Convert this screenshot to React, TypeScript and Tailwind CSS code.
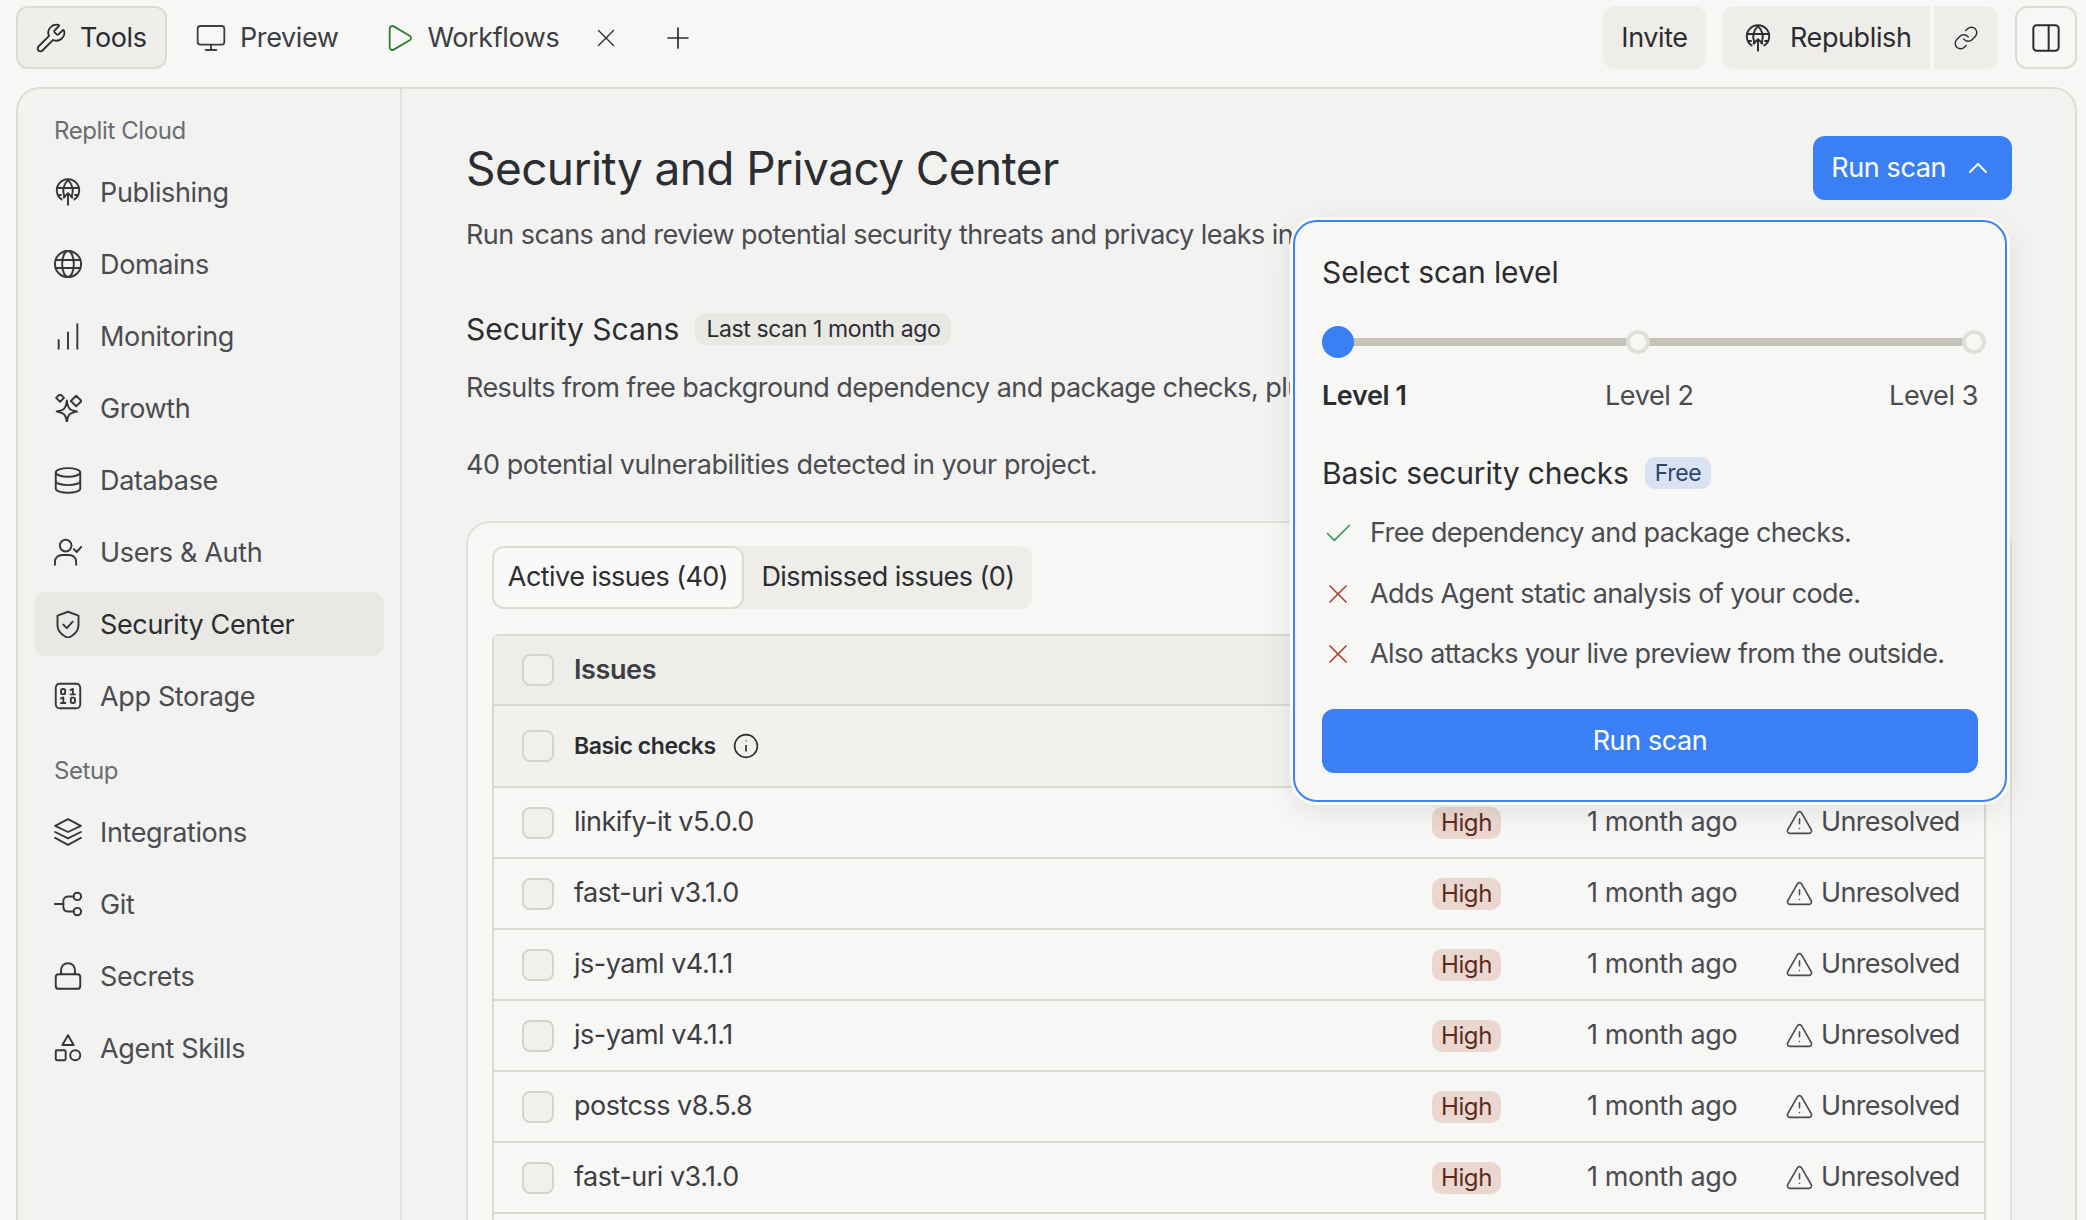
import type { ReactNode } from "react";
import { X, Plus, ChevronUp, Check, Link, Wrench, Monitor, Play, TriangleAlert } from "lucide-react";

function Ico({ children, className = "w-7 h-7" }: { children: ReactNode; className?: string }) {
  return (
    <svg viewBox="0 0 24 24" fill="none" stroke="currentColor" strokeWidth="1.65" strokeLinecap="round" strokeLinejoin="round" className={`shrink-0 ${className}`}>
      {children}
    </svg>
  );
}

const PublishIcon = ({ className }: { className?: string }) => (
  <Ico className={className}>
    <path d="M6.5 18.5A9.6 9.6 0 1 1 17.5 18.5" />
    <path d="M9 16.5C7 11 8 5.5 12 1.8C16 5.5 17 11 15 16.5" />
    <path d="M2.6 8.5h18.8M3.4 14.5h2.6M18 14.5h2.6" />
    <path d="M12 23V13M8.2 16.8L12 13l3.8 3.8" />
  </Ico>
);
const GlobeIcon = () => (
  <Ico>
    <circle cx="12" cy="12" r="11.2" />
    <ellipse cx="12" cy="12" rx="5" ry="11.2" />
    <path d="M1.5 8.5h21M1.5 15.5h21" />
  </Ico>
);
const BarsIcon = () => (
  <Ico>
    <path d="M4 23v-7.5M12 23V9M20 23V2" />
  </Ico>
);
const GrowthIcon = () => (
  <Ico>
    <path d="M11 5.5C11.8 12 13 13.8 19.7 15C13 16.2 11.8 18 11 24.5C10.2 18 9 16.2 2.3 15C9 13.8 10.2 12 11 5.5Z" />
    <path d="M5.2 0L8.6 3.3L5.2 6.6L1.8 3.3Z" />
    <path d="M19 1.5L23.6 6L19 10.5L14.4 6Z" />
  </Ico>
);
const DatabaseIcon = () => (
  <Ico>
    <ellipse cx="12" cy="5.5" rx="10.5" ry="3.7" />
    <path d="M1.5 5.5V19.5C1.5 21.5 6.5 23 12 23C17.5 23 22.5 21.5 22.5 19.5V5.5" />
    <path d="M1.5 13C1.5 15 6.5 16.4 12 16.4C17.5 16.4 22.5 15 22.5 13" />
  </Ico>
);
const UserCheckIcon = () => (
  <Ico>
    <circle cx="10" cy="6.5" r="5" />
    <path d="M0.8 23V20.5C0.8 17 3.5 14.5 7 14.5H13C16.5 14.5 19 17 19 20.5V23" />
    <path d="M17 9.5L19.5 12L23.5 7.5" />
  </Ico>
);
const ShieldIcon = () => (
  <Ico>
    <path d="M12 1.5L21 4.8V13C21 18 17.5 21.5 12 24C6.5 21.5 3 18 3 13V4.8Z" />
    <path d="M8 12.5L11 15.5L16 10" />
  </Ico>
);
const BinaryIcon = () => (
  <Ico>
    <rect x="1.5" y="1.5" width="21" height="21" rx="3.5" />
    <rect x="6" y="6" width="3.6" height="4.4" rx="1.4" />
    <path d="M14.2 6.8L16.2 6V10.6M14.2 10.6H18" />
    <path d="M6 14L8 13.3V18M6 18H9.8" />
    <rect x="14.4" y="13.4" width="3.6" height="4.6" rx="1.4" />
  </Ico>
);
const LayersIcon = () => (
  <Ico>
    <path d="M12 1L23 6.8L12 12L1 6.8Z" />
    <path d="M1 12L12 17.5L23 12" />
    <path d="M1 17L12 23L23 17" />
  </Ico>
);
const GitIcon = () => (
  <Ico>
    <path d="M0.5 12H8" />
    <path d="M17 5.5H12C9.5 5.5 8 7.3 8 9.5V14C8 16.7 9.5 18.5 12 18.5H17" />
    <circle cx="20" cy="5.5" r="3.2" />
    <circle cx="20" cy="18.5" r="3.2" />
  </Ico>
);
const LockIcon = () => (
  <Ico>
    <rect x="1.5" y="10.5" width="21" height="12.5" rx="2.5" />
    <path d="M6 10.5V7.5C6 3.5 8.5 1 12 1C15.5 1 18 3.5 18 7.5V10.5" />
  </Ico>
);
const ShapesIcon = () => (
  <Ico>
    <path d="M12 1L16.8 9.5H7.2Z" />
    <rect x="1.5" y="14" width="8.5" height="8.5" rx="1" />
    <circle cx="18.2" cy="18.2" r="4.3" />
  </Ico>
);

function NavRow({ icon, label, active }: { icon: ReactNode; label: string; active?: boolean }) {
  return (
    <div className={`flex items-center h-16 px-5 gap-[18px] rounded-xl shrink-0 ${active ? "bg-[#e9e8e4] text-[#2b2d31]" : "text-[#4a4c52]"}`}>
      <span className="text-[#35373c]">{icon}</span>
      <span className="text-[27px] leading-none tracking-[-0.35px]">{label}</span>
    </div>
  );
}

const issues = ["linkify-it v5.0.0", "fast-uri v3.1.0", "js-yaml v4.1.1", "js-yaml v4.1.1", "postcss v8.5.8", "fast-uri v3.1.0"];

function Box() {
  return <div className="w-8 h-8 rounded-lg border-2 border-[#d5d3cc] bg-[#f0f0ec] shrink-0" />;
}

function IssueRow({ name }: { name: string }) {
  return (
    <div className="flex items-center h-[71px] pl-[28px] pr-[24px] border-b-2 border-[#d9d8d1] text-[27px] text-[#3c3e44]">
      <Box />
      <span className="ml-[20px] flex-1 tracking-[-0.5px]">{name}</span>
      <span className="w-[69px] h-8 rounded-[10px] bg-[#ead8d0] text-[#5e2a1e] text-[24px] flex items-center justify-center">High</span>
      <span className="ml-[86px] w-[148px] whitespace-nowrap text-[#4a4c52]">1 month ago</span>
      <span className="ml-[50px] flex items-center gap-[7px] w-[175px] whitespace-nowrap text-[#4a4c52] tracking-[-0.7px]">
        <TriangleAlert className="w-[29px] h-[29px] shrink-0" strokeWidth={1.3} />
        Unresolved
      </span>
    </div>
  );
}

function Level({ label, bold, className = "" }: { label: string; bold?: boolean; className?: string }) {
  return <span className={`text-[27px] ${bold ? "font-semibold text-[#2b2d31]" : "text-[#4a4c52]"} ${className}`}>{label}</span>;
}

function CheckLine({ ok, text }: { ok?: boolean; text: string }) {
  return (
    <div className="flex items-center gap-[14px] -ml-[2px] h-[60.5px] text-[27px] text-[#4a4c52] tracking-[-0.6px]">
      <span className="w-9 h-9 flex items-center justify-center shrink-0">
        {ok ? <Check className="w-[33px] h-[33px] text-[#3d9a5c]" strokeWidth={1.25} /> : <X className="w-8 h-8 text-[#a8412f]" strokeWidth={1.25} />}
      </span>
      <span>{text}</span>
    </div>
  );
}

function ScanPopover() {
  return (
    <div className="absolute left-[1293px] top-[220px] w-[714px] h-[582px] rounded-3xl border-2 border-[#3f82f5] bg-[#f7f7f5] px-[27px] shadow-[0_0_0_3px_#fbfbfa,0_8px_30px_rgba(0,0,0,0.1)] flex flex-col">
      <div className="mt-[30px] text-[30px] leading-[40px] text-[#2b2d31] tracking-[-0.1px]">Select scan level</div>
      <div className="relative mt-[38px] h-6">
        <div className="absolute left-0 right-0 top-2 h-2 bg-[#c5c2b8] rounded-full" />
        <div className="absolute left-0 top-[-4px] w-8 h-8 rounded-full bg-[#3b7ff5]" />
        <div className="absolute left-[304px] top-0 w-6 h-6 rounded-full border-[4px] border-[#e0dfda] bg-[#f7f7f5]" />
        <div className="absolute right-[-8px] top-0 w-6 h-6 rounded-full border-[4px] border-[#e0dfda] bg-[#f7f7f5]" />
      </div>
      <div className="mt-[25px] flex justify-between items-center h-[34px]">
        <Level label="Level 1" bold />
        <Level label="Level 2" className="ml-[3px]" />
        <Level label="Level 3" />
      </div>
      <div className="mt-[40px] flex items-center gap-4 h-[40px]">
        <span className="text-[30px] text-[#2b2d31] tracking-[-0.15px]">Basic security checks</span>
        <span className="h-8 px-[10px] rounded-[10px] bg-[#d8e2f3] text-[#2f4569] text-[23px] flex items-center">Free</span>
      </div>
      <div className="mt-[10px] flex flex-col">
        <CheckLine ok text="Free dependency and package checks." />
        <CheckLine text="Adds Agent static analysis of your code." />
        <CheckLine text="Also attacks your live preview from the outside." />
      </div>
      <button className="mt-[24px] w-full h-16 pt-[1px] rounded-xl bg-[#3b7ff5] text-white text-[27px]">Run scan</button>
    </div>
  );
}

export default function App() {
  return (
    <div className="relative h-[1220px] overflow-hidden bg-[#f7f7f5] font-['Inter','Liberation_Sans',sans-serif] text-[#2b2d31] tracking-[-0.4px]">
      <div className="h-[87px] pl-4 pr-[9px] pt-[6px] flex items-start">
        <div className="flex items-center h-[63px] gap-[13px] w-[151px] pl-[17px] pt-[1px] rounded-xl border-2 border-[#dcdbd4] bg-[#efeeea] text-[27px]">
          <Wrench className="w-8 h-8" strokeWidth={1.35} />
          Tools
        </div>
        <div className="flex items-center h-[63px] pt-[1px] gap-[13px] ml-[28px] text-[27px] text-[#3c3e44]">
          <Monitor className="w-8 h-8" strokeWidth={1.35} />
          Preview
        </div>
        <div className="flex items-center h-[63px] pt-[1px] gap-[12px] ml-[45px] text-[27px] text-[#3c3e44]">
          <Play className="w-8 h-8 text-[#2f7d32]" strokeWidth={1.35} />
          Workflows
        </div>
        <div className="flex items-center h-[63px] ml-[32px]">
          <X className="w-[30px] h-[30px]" strokeWidth={1.1} />
        </div>
        <div className="flex items-center h-[63px] ml-[40px]">
          <Plus className="w-[34px] h-[34px]" strokeWidth={1.2} />
        </div>
        <div className="ml-auto flex items-center h-[63px] pt-[1px] justify-center w-[103px] rounded-xl bg-[#eeede9] text-[27px]">Invite</div>
        <div className="ml-4 flex items-center h-[63px] pt-[1px] w-[208px] pl-[22px] gap-[18px] rounded-l-xl bg-[#eeede9] text-[27px]">
          <PublishIcon className="w-7 h-7" />
          Republish
        </div>
        <div className="ml-1 flex items-center justify-center h-[63px] w-[64px] rounded-r-xl bg-[#eeede9]">
          <Link className="w-[26px] h-[26px]" strokeWidth={1.3} />
        </div>
        <div className="ml-[17px] flex items-center justify-center h-[63px] w-[62px] rounded-xl border-2 border-[#dcdbd4]">
          <svg viewBox="0 0 24 24" fill="none" stroke="currentColor" strokeWidth="1.5" className="w-8 h-8">
            <rect x="2.5" y="2.5" width="19" height="19" rx="2.5" />
            <path d="M14 2.5V21.5" />
          </svg>
        </div>
      </div>

      <div className="ml-4 mr-[9px] h-[1300px] flex rounded-t-3xl border-2 border-[#dddcd5] bg-[#f2f2f0]">
        <aside className="w-[384px] shrink-0 border-r-2 border-[#e3e2dd] pl-4 pr-4 flex flex-col">
          <div className="mt-[26px] pl-5 h-8 flex items-center text-[24px] text-[#6b6d73]">Replit Cloud</div>
          <div className="mt-[13px] flex flex-col gap-2">
            <NavRow icon={<PublishIcon />} label="Publishing" />
            <NavRow icon={<GlobeIcon />} label="Domains" />
            <NavRow icon={<BarsIcon />} label="Monitoring" />
            <NavRow icon={<GrowthIcon />} label="Growth" />
            <NavRow icon={<DatabaseIcon />} label="Database" />
            <NavRow icon={<UserCheckIcon />} label="Users & Auth" />
            <NavRow icon={<ShieldIcon />} label="Security Center" active />
            <NavRow icon={<BinaryIcon />} label="App Storage" />
          </div>
          <div className="mt-[27px] pl-5 h-8 flex items-center text-[24px] text-[#6b6d73]">Setup</div>
          <div className="mt-[13px] flex flex-col gap-2">
            <NavRow icon={<LayersIcon />} label="Integrations" />
            <NavRow icon={<GitIcon />} label="Git" />
            <NavRow icon={<LockIcon />} label="Secrets" />
            <NavRow icon={<ShapesIcon />} label="Agent Skills" />
          </div>
        </aside>

        <main className="flex-1 min-w-0 pl-[64px] pr-[63px]">
          <div className="flex items-start justify-between pt-[47px]">
            <h1 className="text-[46px] leading-[64px] tracking-[-0.58px]">Security and Privacy Center</h1>
            <button className="flex items-center gap-[16px] h-16 px-[18px] rounded-xl bg-[#3b7ff5] text-white text-[27px]">
              Run scan
              <ChevronUp className="w-8 h-8" strokeWidth={1.4} />
            </button>
          </div>
          <p className="mt-[15px] text-[27px] leading-[40px] text-[#4a4c52] whitespace-nowrap tracking-[-0.55px]">Run scans and review potential security threats and privacy leaks in</p>
          <div className="mt-[54px] flex items-center gap-4 h-10">
            <h2 className="text-[30px] tracking-normal">Security Scans</h2>
            <span className="h-8 px-[11px] rounded-[10px] bg-[#e9e8e4] text-[23px] flex items-center">Last scan 1 month ago</span>
          </div>
          <p className="mt-[19px] text-[27px] leading-[40px] text-[#4a4c52] whitespace-nowrap tracking-[-0.55px]">Results from free background dependency and package checks, plu</p>
          <p className="mt-[37px] text-[27px] leading-[40px] text-[#4a4c52] tracking-[-0.45px]">40 potential vulnerabilities detected in your project.</p>

          <section className="mt-[36px] rounded-t-3xl border-2 border-[#e1e0da] bg-[#f7f7f5] px-[24px] pt-[23px] h-[800px]">
            <div className="flex w-[540px] h-[63px] rounded-xl bg-[#eeede9]">
              <div className="w-[252px] flex items-center justify-center rounded-xl border-2 border-[#dcdbd4] bg-[#f9f9f7] text-[27px] tracking-[-0.55px]">Active issues (40)</div>
              <div className="flex-1 flex items-center justify-center text-[27px] tracking-[-0.55px]">Dismissed issues (0)</div>
            </div>
            <div className="mt-[25px] rounded-t-lg border-x-2 border-t-2 border-[#d9d8d1]">
              <div className="flex items-center h-[70px] pl-[28px] bg-[#edede9] border-b-2 border-[#d9d8d1]">
                <Box />
                <span className="ml-[20px] text-[27px] font-semibold text-[#3c3e44]">Issues</span>
              </div>
              <div className="flex items-center h-[82px] pl-[28px] bg-[#f1f1ee] border-b-2 border-[#d9d8d1]">
                <Box />
                <span className="ml-[20px] text-[23px] font-semibold">Basic checks</span>
                <svg viewBox="0 0 24 24" fill="none" stroke="currentColor" strokeWidth="1.5" className="ml-[17px] w-[26px] h-[26px]">
                  <circle cx="12" cy="12" r="10.5" />
                  <path d="M12 11v6M12 7v.5" />
                </svg>
              </div>
              {issues.map((name, i) => (
                <IssueRow key={i} name={name} />
              ))}
              <div className="h-[71px]" />
            </div>
          </section>
        </main>
      </div>
      <ScanPopover />
    </div>
  );
}
